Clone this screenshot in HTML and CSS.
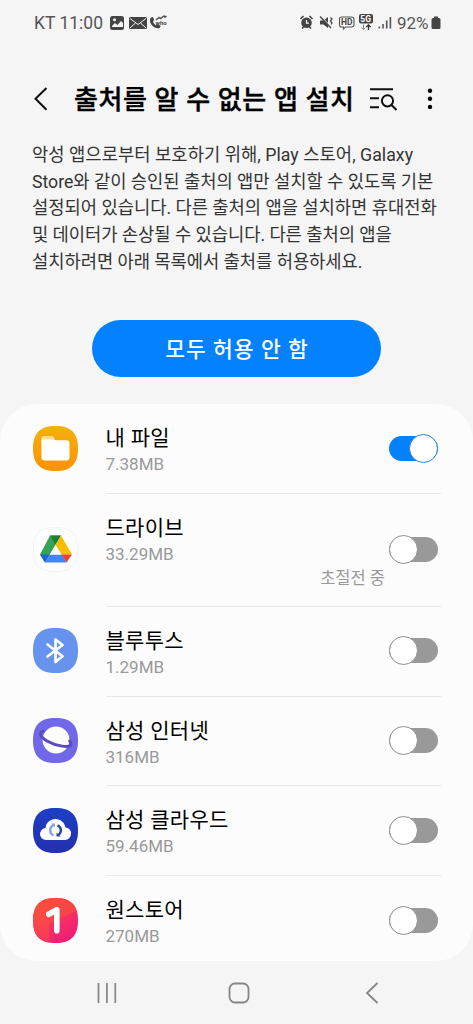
FILE: index.html
```html
<!DOCTYPE html>
<html lang="ko">
<head>
<meta charset="utf-8">
<title>출처를 알 수 없는 앱 설치</title>
<link rel="stylesheet" href="styles.css">
</head>
<body>
<div class="screen">
  <header class="status">
    <span class="clock">KT 11:00</span>
    <svg class="status-left" width="60" height="18" viewBox="0 0 60 18">
      <rect x="0" y="2" width="14" height="14" rx="2.5" fill="#444"/>
      <path d="M2 12l3-3 2.500 2L11 7l2 2v4H2z" fill="#f4f4f4"/><circle cx="4.500" cy="5.800" r="1.500" fill="#f4f4f4"/>
      <rect x="19" y="3" width="18" height="12" rx="1.500" fill="#444"/>
      <path d="M20 4.500l8 6 8-6M20 14l5.500-5M36 14l-5.500-5" fill="none" stroke="#f4f4f4" stroke-width="1"/>
      <path d="M41 3.500c-1.800 2-1 5.500 1.200 8s5.600 3.600 7.800 2.200l.6-1.600-3-2-1.600 1.200c-1.700-.8-2.700-2.200-3-3.700l1.200-1.600-1.200-3z" fill="#444"/>
      <path d="M46 6l3-2.500 1.500 1 3.500-2.500 1 1.200 1.500-1.200" fill="none" stroke="#555" stroke-width="1.500"/>
      <text x="45.500" y="11" class="who">who</text>
    </svg>
    <svg class="status-right" width="94" height="20" viewBox="0 0 94 20">
      <g fill="none" stroke="#444" stroke-width="1.600">
        <circle cx="6.500" cy="9.700" r="4.500" fill="#444"/>
        <path d="M.5 6l3-3M12.500 6l-3-3M2 15.500l2-2M11 15.500l-2-2"/>
      </g>
      <path d="M6.500 7v3.200H9" fill="none" stroke="#f4f4f4" stroke-width="1.200"/>
      <path d="M20 7.500h3.500L28 4v11l-4.500-3.500H20z" fill="#444"/>
      <path d="M20.500 2.800l11 11.500" stroke="#f4f4f4" stroke-width="1.200"/>
      <path d="M20 3.500l11 11.500" stroke="#444" stroke-width="1.400"/>
      <path d="M30.500 4.500l1.500 1.500-1.500 2 1.500 2-1 1.500" fill="none" stroke="#444" stroke-width="1.300"/>
      <path d="M41.500 4h10a2.500 2.500 0 0 1 2.500 2.500v5a2.500 2.500 0 0 1-2.500 2.500h-6l-2 2v-2h-2a2 2 0 0 1-2-2v-6a2 2 0 0 1 2-2z" fill="none" stroke="#555" stroke-width="1.100"/>
      <text x="40.900" y="12.200" class="hd">HD</text>
      <rect x="59" y="1" width="14" height="9.500" rx="2" fill="#444"/>
      <text x="60.300" y="9" class="fiveg">5G</text>
      <path d="M63.500 11.500v5M61.500 14.500l2 2 2-2" fill="none" stroke="#888" stroke-width="1"/>
      <path d="M68.500 17v-5M66.300 14l2.200-2.200 2.200 2.200" fill="none" stroke="#333" stroke-width="1.300"/>
      <path d="M79.300 13.500v2M83 11v4.500M86.700 7.500v8M90.400 4v11.500" stroke="#555" stroke-width="1.600"/>
    </svg>
    <span class="percent">92%</span>
    <svg class="battery" width="10" height="14" viewBox="0 0 10 14"><path d="M3 .5h4V2h1a1.500 1.500 0 0 1 1.500 1.500v8A1.500 1.500 0 0 1 8 13H2a1.500 1.500 0 0 1-1.500-1.500v-8A1.500 1.500 0 0 1 2 2h1z" fill="#444"/></svg>
  </header>

  <div class="appbar">
    <svg class="back" width="16" height="26" viewBox="0 0 16 26"><path d="M13.500 2L2.500 12.800l11 11" fill="none" stroke="#111" stroke-width="2"/></svg>
    <h1 class="title">출처를 알 수 없는 앱 설치</h1>
    <svg class="search" width="30" height="26" viewBox="0 0 30 26"><path d="M1 3.300h23M1 12.300h9M1 21.300h9M22.500 19l5 5" fill="none" stroke="#111" stroke-width="2"/><circle cx="18.500" cy="14.800" r="5.600" fill="none" stroke="#111" stroke-width="2"/></svg>
    <svg class="more" width="6" height="22" viewBox="0 0 6 22"><circle cx="3" cy="2.700" r="2.200"/><circle cx="3" cy="10.700" r="2.200"/><circle cx="3" cy="18.900" r="2.200"/></svg>
  </div>

  <p class="intro">
    <span class="l1">악성 앱으로부터 보호하기 위해, Play 스토어, Galaxy</span>
    <span class="l2">Store와 같이 승인된 출처의 앱만 설치할 수 있도록 기본</span>
    <span class="l3">설정되어 있습니다. 다른 출처의 앱을 설치하면 휴대전화</span>
    <span class="l4">및 데이터가 손상될 수 있습니다. 다른 출처의 앱을</span>
    <span class="l5">설치하려면 아래 목록에서 출처를 허용하세요.</span>
  </p>

  <button class="deny">모두 허용 안 함</button>

  <main class="card">
    <section class="row">
      <svg class="icon" viewBox="0 0 45 45">
        <defs><linearGradient id="files" x2="0" y2="1"><stop stop-color="#f5b00c"/><stop offset="1" stop-color="#fb9203"/></linearGradient></defs>
        <path d="M22.500 0C38 0 45 7 45 22.500S38 45 22.500 45 0 38 0 22.500 7 0 22.500 0Z" fill="url(#files)"/>
        <path d="M8.500 16v-4a2 2 0 0 1 2-2h8.500a2 2 0 0 1 2 1.500l1 3.500z" fill="#fddc92"/>
        <path d="M8.500 13.500H21l1.500.8h11A3 3 0 0 1 36.500 17v14.500a3 3 0 0 1-3 3h-22a3 3 0 0 1-3-3z" fill="#fff"/>
      </svg>
      <div class="info"><div class="line"><div class="text"><h2 class="name">내 파일</h2><div class="size">7.38MB</div></div><span class="switch on"></span></div></div>
    </section>
    <section class="row tall">
      <svg class="icon" viewBox="0 0 45 45">
        <path d="M22.500 .5C38 .5 44.500 7 44.500 22.500S38 44.500 22.500 44.500.5 38 .5 22.500 7 .5 22.500 .5Z" fill="#fff" stroke="#f1f1f1"/>
        <path d="M17 8.500h11l-16 27-5-8z" fill="#34a453"/>
        <path d="M17 8.500h11l-5.500 9.200z" fill="#188038"/>
        <path d="M28 8.500l11 19H28.500l-6-9.800z" fill="#fbbc04"/>
        <path d="M7 27.500h10l-5 8z" fill="#1967d2"/>
        <path d="M17 27.500h12l4.500 8H12z" fill="#4285f4"/>
        <path d="M28.500 27.500H39l-5.500 8z" fill="#ea4335"/>
        <path d="M22.500 18.500l5.500 9H17z" fill="#fff"/>
      </svg>
      <div class="info"><div class="line"><div class="text"><h2 class="name">드라이브</h2><div class="size">33.29MB</div></div><span class="switch"></span></div><div class="note">초절전 중</div></div>
    </section>
    <section class="row">
      <svg class="icon" viewBox="0 0 45 45">
        <path d="M22.500 0C38 0 45 7 45 22.500S38 45 22.500 45 0 38 0 22.500 7 0 22.500 0Z" fill="#6693ed"/>
        <path d="M14.500 16.500l15 11.800-7 5.700V11.500l7 5.500-15 11.500" fill="none" stroke="#fff" stroke-width="2.700" stroke-linecap="round" stroke-linejoin="round"/>
      </svg>
      <div class="info"><div class="line"><div class="text"><h2 class="name">블루투스</h2><div class="size">1.29MB</div></div><span class="switch"></span></div></div>
    </section>
    <section class="row">
      <svg class="icon" viewBox="0 0 45 45">
        <path d="M22.500 0C38 0 45 7 45 22.500S38 45 22.500 45 0 38 0 22.500 7 0 22.500 0Z" fill="#7168e9"/>
        <circle cx="23" cy="22" r="13.500" fill="#fff"/>
        <path d="M11.500 13C6 13.500 5.500 18 14 23s24 7.500 24 3.500c0-1.500-.7-3-2-4.500" fill="none" stroke="#5a4dba" stroke-width="3"/>
      </svg>
      <div class="info"><div class="line"><div class="text"><h2 class="name">삼성 인터넷</h2><div class="size">316MB</div></div><span class="switch"></span></div></div>
    </section>
    <section class="row">
      <svg class="icon" viewBox="0 0 45 45">
        <defs><linearGradient id="cloud" x2="0" y2="1"><stop stop-color="#1d3fc5"/><stop offset="1" stop-color="#2530ae"/></linearGradient></defs>
        <path d="M22.500 0C38 0 45 7 45 22.500S38 45 22.500 45 0 38 0 22.500 7 0 22.500 0Z" fill="url(#cloud)"/>
        <path d="M13 32a6 6 0 0 1-6-6 6 6 0 0 1 5.500-6C13 14.500 17.500 11 22.500 11s9 3.500 10 8.500A6 6 0 0 1 38 26a6 6 0 0 1-6 6z" fill="#fff"/>
        <path d="M20.500 27.300c-4.500-2-4.500-8 0-10.300" fill="none" stroke="#85a6e5" stroke-width="2.400"/><path d="M18 15.500h4v4z" fill="#85a6e5"/>
        <path d="M24.500 17.300c4.500 2 4.500 8 0 10" fill="none" stroke="#2549a8" stroke-width="2.400"/><path d="M23.500 24.500v4h4z" fill="#2549a8"/>
      </svg>
      <div class="info"><div class="line"><div class="text"><h2 class="name">삼성 클라우드</h2><div class="size">59.46MB</div></div><span class="switch"></span></div></div>
    </section>
    <section class="row last">
      <svg class="icon" viewBox="0 0 45 45">
        <defs>
          <linearGradient id="one" x2=".7" y2="1"><stop stop-color="#fb503f"/><stop offset="1" stop-color="#f11b78"/></linearGradient>
          <linearGradient id="side" x2="0" y2="1"><stop stop-color="#fb5140"/><stop offset="1" stop-color="#f8355c"/></linearGradient>
          <clipPath id="shape"><path d="M22.500 0C38 0 45 7 45 22.500S38 45 22.500 45 0 38 0 22.500 7 0 22.500 0Z"/></clipPath>
        </defs>
        <g clip-path="url(#shape)"><path d="M0 0h45v45H0z" fill="url(#one)"/><path d="M0 12l16 13v20H0z" fill="url(#side)"/><path d="M0 0h45v12L16 26 0 13z" fill="#fa5236" opacity=".6"/></g>
        <path d="M15.800 16.300l8-4.600v21" fill="none" stroke="#fff" stroke-width="5.600" stroke-linecap="round" stroke-linejoin="round"/>
      </svg>
      <div class="info"><div class="line"><div class="text"><h2 class="name">원스토어</h2><div class="size">270MB</div></div><span class="switch"></span></div></div>
    </section>
  </main>

  <nav class="nav">
    <svg width="20" height="20" viewBox="0 0 20 20"><path d="M1.500 0v20M9.900 0v20M18.300 0v20" stroke="#858585" stroke-width="1.700"/></svg>
    <svg class="home" width="22" height="22" viewBox="0 0 22 22"><rect x="1.500" y="1.500" width="19" height="19" rx="5.500" fill="none" stroke="#858585" stroke-width="1.800"/></svg>
    <svg width="14" height="22" viewBox="0 0 14 22"><path d="M12.500 1L2 11l10.500 10" fill="none" stroke="#858585" stroke-width="1.800"/></svg>
  </nav>
</div>
</body>
</html>
```

FILE: styles.css
```css
*, *::before, *::after { box-sizing: border-box; }
body { margin: 0; background: #f5f5f5; font-family: Roboto, "Noto Sans CJK KR", sans-serif; color: #000; }
svg { display: block; flex: none; }
.screen { width: 473px; height: 1024px; overflow: hidden; display: flex; flex-direction: column; }

.status { height: 46px; padding: 0 32px 0 34px; display: flex; align-items: center; color: #555; font-size: 17.500px; white-space: nowrap; }
.clock { width: 76px; }
.percent { margin-left: 3px; font-size: 17px; width: 34px; }
.status-right { margin-left: auto; }
.who { font: bold 6px Roboto, sans-serif; fill: #444; }
.hd { font: bold 8.500px Roboto, sans-serif; fill: #444; }
.fiveg { font: bold 8.500px Roboto, sans-serif; fill: #fff; }

.appbar { height: 96px; padding: 9px 40px 0 33px; display: flex; align-items: center; }
.title { margin: 0 0 0 25px; padding-top: 2px; width: 295px; font-size: 26px; letter-spacing: .6px; font-weight: 500; -webkit-text-stroke: .4px #000; line-height: 36px; white-space: nowrap; }
.more { margin-left: auto; }

.intro { margin: 0; padding: 0 32px; height: 178px; color: #333; font-size: 17.700px; line-height: 26.700px; white-space: nowrap; }
.intro span { display: block; height: 26.700px; }
.l1 { letter-spacing: .04px; }
.l2, .l3 { letter-spacing: -.02px; }
.l4, .l5 { letter-spacing: -.04px; }

.deny { width: 289px; height: 57px; margin: 0 auto; padding: 0 0 0 1px; border: 0; border-radius: 29px; background: #0381fe; color: #fff; font: 500 21.500px/59px Roboto, "Noto Sans CJK KR", sans-serif; letter-spacing: 1px; }

.card { margin-top: 27px; height: 557px; border-radius: 37px; background: #fcfcfc; }
.row { height: 89.750px; padding: 0 32px 0 33px; display: flex; align-items: flex-start; }
.row.tall { height: 113px; }
.icon { width: 45px; height: 45px; margin-top: 21.500px; }
.tall .icon { margin-top: 33px; }
.info { width: 336px; height: 100%; margin-left: 27.500px; border-bottom: 1.500px solid #e8e8e8; }
.last .info { border: 0; }
.line { display: flex; justify-content: space-between; }
.text { padding-top: 19px; }
.name { margin: 0; font-size: 21px; letter-spacing: .3px; font-weight: 400; line-height: 30px; white-space: nowrap; }
.size { margin-top: -1px; font-size: 17px; line-height: 24px; color: #999; }
.switch { width: 49px; height: 29px; margin: 29.500px 3px 0 0; display: flex; align-items: center; position: relative; }
.switch::before { content: ""; position: absolute; inset: 2px 0; border-radius: 13px; background: #999; }
.switch::after { content: ""; position: relative; width: 29px; height: 29px; border: 1.500px solid #8e8e8e; border-radius: 50%; background: #fff; }
.switch.on { justify-content: flex-end; }
.switch.on::before { background: #0381fe; }
.switch.on::after { border-color: #2e82d6; }
.tall .switch { margin-top: 41px; }
.note { margin-top: 1px; padding-right: 56px; text-align: right; color: #999; font-size: 16.500px; line-height: 24px; }

.nav { flex: 1; display: flex; align-items: center; justify-content: space-between; padding: 0 94px 0 97px; }
.home { margin-right: 5px; }
```
